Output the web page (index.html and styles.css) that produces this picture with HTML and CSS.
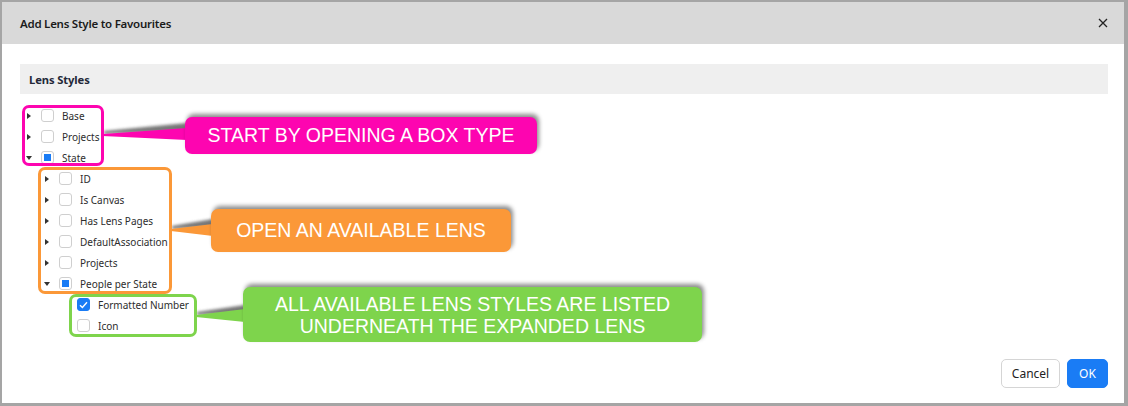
FILE: index.html
```html
<!DOCTYPE html>
<html lang="en">
<head>
<meta charset="utf-8">
<title>Add Lens Style to Favourites</title>
<link rel="stylesheet" href="styles.css">
</head>
<body>
<div class="dialog">
  <header class="dlg-head">
    <span class="title">Add Lens Style to Favourites</span>
    <button class="close" aria-label="Close">
      <svg width="10" height="10" viewBox="0 0 10 10"><path d="M1 1L9 9M9 1L1 9" stroke="#222" stroke-width="1.3" fill="none"/></svg>
    </button>
  </header>
  <main class="dlg-body">
    <div class="section-head">Lens Styles</div>
    <ul class="tree">
      <li class="row l1"><span class="twisty"><i class="arrow right"></i></span><span class="cb"></span><span class="label">Base</span></li>
      <li class="row l1"><span class="twisty"><i class="arrow right"></i></span><span class="cb"></span><span class="label">Projects</span></li>
      <li class="row l1"><span class="twisty"><i class="arrow down"></i></span><span class="cb partial"></span><span class="label">State</span></li>
      <li class="row l2"><span class="twisty"><i class="arrow right"></i></span><span class="cb"></span><span class="label">ID</span></li>
      <li class="row l2"><span class="twisty"><i class="arrow right"></i></span><span class="cb"></span><span class="label">Is Canvas</span></li>
      <li class="row l2"><span class="twisty"><i class="arrow right"></i></span><span class="cb"></span><span class="label">Has Lens Pages</span></li>
      <li class="row l2"><span class="twisty"><i class="arrow right"></i></span><span class="cb"></span><span class="label">DefaultAssociation</span></li>
      <li class="row l2"><span class="twisty"><i class="arrow right"></i></span><span class="cb"></span><span class="label">Projects</span></li>
      <li class="row l2"><span class="twisty"><i class="arrow down"></i></span><span class="cb partial"></span><span class="label">People per State</span></li>
      <li class="row l3"><span class="twisty"></span><span class="cb checked"><svg width="9" height="8" viewBox="0 0 9 8"><path d="M1 4.2L3.4 6.5L8 1.3" stroke="#fff" stroke-width="1.4" fill="none"/></svg></span><span class="label">Formatted Number</span></li>
      <li class="row l3"><span class="twisty"></span><span class="cb"></span><span class="label">Icon</span></li>
    </ul>
  </main>
  <footer class="dlg-foot">
    <button class="btn cancel">Cancel</button>
    <button class="btn ok">OK</button>
  </footer>
</div>

<div class="annotations">
  <svg class="connectors" width="1128" height="406" viewBox="0 0 1128 406">
    <defs>
      <filter id="blur" x="-20%" y="-100%" width="140%" height="300%"><feGaussianBlur stdDeviation="1.6"/></filter>
    </defs>
    <polygon points="104,131 187,123 187,131 104,134" fill="#555" opacity="0.8" filter="url(#blur)"/>
    <polygon points="103,134 187,128 187,140 103,136" fill="#fd05b0"/>
    <polygon points="172,226 213,219 213,227 172,229" fill="#555" opacity="0.8" filter="url(#blur)"/>
    <polygon points="171,229 213,224 213,236 171,231" fill="#fb9838"/>
    <polygon points="197,312 245,305 245,313 197,315" fill="#555" opacity="0.8" filter="url(#blur)"/>
    <polygon points="196,315 245,309 245,322 196,317" fill="#7ed44c"/>
  </svg>
  <div class="outline o-magenta"></div>
  <div class="outline o-orange"></div>
  <div class="outline o-green"></div>
  <div class="callout c-magenta">START BY OPENING A BOX TYPE</div>
  <div class="callout c-orange">OPEN AN AVAILABLE LENS</div>
  <div class="callout c-green">ALL AVAILABLE LENS STYLES ARE LISTED<br>UNDERNEATH THE EXPANDED LENS</div>
</div>
</body>
</html>
```
FILE: styles.css
```css
html, body {
  margin: 0;
  padding: 0;
}
body {
  position: relative;
  width: 1128px;
  height: 406px;
  background: #a5a5a5;
  font-family: "Noto Sans", "Open Sans", sans-serif;
  color: #333;
  overflow: hidden;
}
.dialog {
  position: absolute;
  left: 2px;
  top: 2px;
  width: 1122px;
  height: 401px;
  background: #fff;
  display: flex;
  flex-direction: column;
}
.dlg-head {
  height: 42px;
  background: #d9d9d9;
  display: flex;
  align-items: center;
  justify-content: space-between;
  padding: 0 14px 0 18px;
  flex: none;
}
.title {
  font-size: 11.5px;
  font-weight: 600;
  letter-spacing: -0.25px;
  color: #1b1b1b;
}
.close {
  border: 0;
  background: transparent;
  padding: 0;
  width: 14px;
  height: 14px;
  display: flex;
  align-items: center;
  justify-content: center;
}
.dlg-body {
  flex: 1;
  padding: 20px 16px 0 18px;
}
.section-head {
  height: 30px;
  background: #efefef;
  display: flex;
  align-items: center;
  padding-left: 9px;
  font-size: 11.2px;
  font-weight: 700;
  letter-spacing: -0.1px;
  color: #232838;
}
.tree {
  list-style: none;
  margin: 11px 0 0;
  padding: 0;
}
.row {
  height: 21px;
  display: flex;
  align-items: center;
  font-size: 10px;
  color: #2d2d2d;
}
.l2 { padding-left: 18px; }
.l3 { padding-left: 36px; }
.twisty {
  width: 21px;
  height: 21px;
  box-sizing: border-box;
  padding-left: 7px;
  display: flex;
  align-items: center;
  flex: none;
}
.arrow {
  display: block;
  width: 0;
  height: 0;
}
.arrow.right {
  border-left: 4px solid #333;
  border-top: 3px solid transparent;
  border-bottom: 3px solid transparent;
}
.arrow.down {
  border-top: 4px solid #333;
  border-left: 3px solid transparent;
  border-right: 3px solid transparent;
  margin-left: -1px;
}
.cb {
  width: 13px;
  height: 13px;
  border: 1px solid #cfcfcf;
  border-radius: 3px;
  background: #fff;
  margin-right: 8px;
  box-sizing: border-box;
  display: flex;
  align-items: center;
  justify-content: center;
  flex: none;
}
.cb.partial::after {
  content: "";
  width: 7px;
  height: 7px;
  background: #1a7cf5;
}
.cb.checked {
  background: #1a7cf5;
  border-color: #1a7cf5;
}
.dlg-foot {
  flex: none;
  display: flex;
  justify-content: flex-end;
  gap: 7px;
  padding: 0 16px 15px;
}
.btn {
  height: 29px;
  border-radius: 5px;
  font-family: "Noto Sans", "Open Sans", sans-serif;
  font-size: 12px;
  padding: 0;
}
.cancel {
  width: 59px;
  background: #fff;
  border: 1px solid #d5d5d5;
  color: #222;
}
.ok {
  width: 41px;
  background: #1a7cf5;
  border: 1px solid #1a7cf5;
  color: #fff;
}
.annotations {
  position: absolute;
  inset: 0;
  pointer-events: none;
}
.connectors {
  position: absolute;
  left: 0;
  top: 0;
}
.outline {
  position: absolute;
  box-sizing: border-box;
  border: 3px solid;
  border-radius: 7px;
}
.o-magenta {
  left: 22px; top: 105px; width: 82px; height: 61px;
  border-color: #fd05b0;
}
.o-orange {
  left: 38px; top: 167px; width: 134px; height: 127px;
  border-color: #fb9838;
}
.o-green {
  left: 69px; top: 294px; width: 128px; height: 43px;
  border-color: #7ed44c;
}
.callout {
  position: absolute;
  box-sizing: border-box;
  border-radius: 7px;
  color: #fff;
  font-family: "Liberation Sans", Arial, sans-serif;
  font-size: 19.5px;
  text-align: center;
  display: flex;
  align-items: center;
  justify-content: center;
  box-shadow: 2px -3px 4px rgba(0, 0, 0, 0.45);
}
.c-magenta {
  left: 185px; top: 117px; width: 352px; height: 37px;
  background: #fd05b0;
}
.c-orange {
  left: 211px; top: 209px; width: 300px; height: 43px;
  background: #fb9838;
}
.c-green {
  left: 243px; top: 287px; width: 459px; height: 55px;
  background: #7ed44c;
  line-height: 22px;
}
```
